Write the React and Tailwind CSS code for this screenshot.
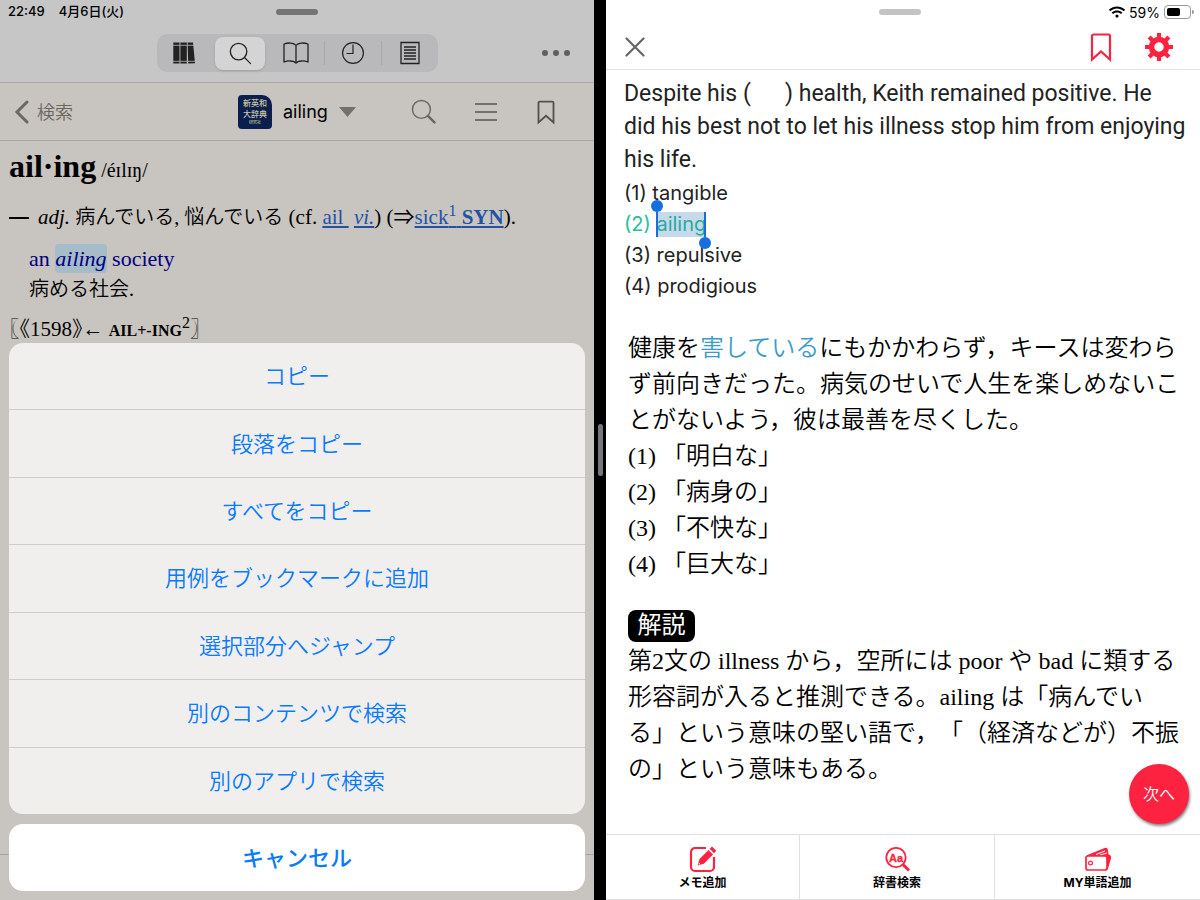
import { FaWifi } from "react-icons/fa";

const sheetActions = [
  "コピー",
  "段落をコピー",
  "すべてをコピー",
  "用例をブックマークに追加",
  "選択部分へジャンプ",
  "別のコンテンツで検索",
  "別のアプリで検索",
];

const choices = ["tangible", "ailing", "repulsive", "prodigious"];
const meanings = ["「明白な」", "「病身の」", "「不快な」", "「巨大な」"];

const SearchIcon = ({ className, handle = 1.2 }) => (
  <svg className={className} viewBox="0 0 24 24" fill="none" stroke="currentColor" strokeWidth="1.4">
    <circle cx="10" cy="10" r="8.6" />
    <path d="M16.2 16.2L22.5 22.5" strokeWidth={handle} strokeLinecap="round" />
  </svg>
);

const BooksIcon = () => (
  <svg className="w-6 h-6" viewBox="0 0 24 24" fill="currentColor">
    <path d="M1.3 1.5h6.2v21H1.3zM8.4 1.5h6.4v21H8.4zM15.6 1.5h5.4l2 20.8-6.8.2z" />
    <path d="M1 4.3h21M1 20.3h22" stroke="#b9b9bb" strokeWidth="0.8" />
  </svg>
);

const OpenBookIcon = () => (
  <svg className="w-7 h-6" viewBox="0 0 28 24" fill="none" stroke="currentColor" strokeWidth="1.3" strokeLinejoin="round">
    <path d="M14 4.500C12 1.500 6 1.500 2 3v18c4-1.500 10-1.500 12 1 2-2.500 8-2.500 12-1V3c-4-1.500-10-1.500-12 1.500zM14 4.500V22" />
  </svg>
);

const ClockIcon = () => (
  <svg className="w-6 h-6" viewBox="0 0 24 24" fill="none" stroke="currentColor" strokeWidth="1.2">
    <circle cx="12" cy="12" r="10.4" />
    <path d="M12 3.5v9H5.5" />
  </svg>
);

const PageIcon = () => (
  <svg className="w-6 h-6" viewBox="0 0 24 24" fill="none" stroke="currentColor" strokeWidth="1.3">
    <path d="M3 1.5h18v21H3zM6 6h12M6 9h12M6 12h12M6 15h12M6 18h12" />
  </svg>
);

const BookmarkIcon = ({ className, width }) => (
  <svg className={className} viewBox="0 0 24 30" fill="none" stroke="currentColor" strokeWidth={width}>
    <path d="M3 27.5V4a1.5 1.5 0 0 1 1.5-1.5h15A1.5 1.5 0 0 1 21 4v23.500l-9-8z" />
  </svg>
);

const GearIcon = () => (
  <svg className="w-7 h-7" viewBox="0 0 28 28" fill="none" stroke="currentColor">
    <circle cx="14" cy="14" r="7.5" strokeWidth="5.6" />
    <path
      d="M14 0v5M14 23v5M0 14h5M23 14h5M4.100 4.100l3.500 3.500M20.400 20.400l3.500 3.500M23.900 4.100l-3.500 3.500M7.600 20.400l-3.500 3.500"
      strokeWidth="4.2"
    />
  </svg>
);

const MemoIcon = () => (
  <svg className="w-7 h-7" viewBox="0 0 28 28" fill="none" stroke="currentColor">
    <path d="M17 3H6a4 4 0 0 0-4 4v15a4 4 0 0 0 4 4h15a4 4 0 0 0 4-4V12" strokeWidth="2.2" />
    <path d="M8.500 20.500l2-6.500L19.500 5l4.500 4.500-9.200 9.300zM20.700 3.800L23 1.500 27.300 5.800 25 8.200z" fill="currentColor" stroke="none" />
    <circle cx="10.300" cy="18.700" r="0.800" fill="white" stroke="none" />
  </svg>
);

const DictIcon = () => (
  <svg className="w-7 h-7" viewBox="0 0 28 28" fill="none" stroke="currentColor">
    <circle cx="13" cy="12.5" r="9.7" strokeWidth="1.8" />
    <path d="M20 19.5l6 6" strokeWidth="3" />
    <text x="13" y="16.5" textAnchor="middle" fontSize="11" fontFamily="Liberation Sans, sans-serif" fill="currentColor" strokeWidth="0.3">
      Aa
    </text>
  </svg>
);

const CardsIcon = () => (
  <svg className="w-7 h-7" viewBox="0 0 28 28" fill="none" stroke="currentColor" strokeWidth="1.7" strokeLinejoin="round">
    <path d="M3 11l18-7.300c1-.4 1.800.2 2 1.300l.8 5c2 .5 2.700 1.500 2.400 3L23 24" fill="currentColor" />
    <path d="M12 9.500l9-3.500M16 10l7-2" stroke="white" strokeWidth="1" />
    <rect x="2" y="11" width="21" height="14" rx="2" fill="white" />
    <circle cx="6.5" cy="18" r="1.9" strokeWidth="1.2" />
  </svg>
);

const DictionaryPane = () => (
  <section className="relative flex-1 min-w-0 flex flex-col bg-[#c8c4bf] text-black overflow-hidden">
    <header className="bg-[#c6c6c7] border-b border-[#a8a8a8]">
      <div className="grid grid-cols-3 items-center h-6 px-2">
        <div className="flex gap-3.5 text-[13px] font-medium font-['Inter','Noto_Sans_CJK_JP',sans-serif] whitespace-nowrap">
          <span>22:49</span>
          <span>4月6日(火)</span>
        </div>
        <span className="justify-self-center w-[42px] h-[6px] rounded-full bg-[#747475]" />
      </div>
      <div className="grid grid-cols-[1fr_auto_1fr] items-center h-[58px]">
        <nav className="col-start-2 flex items-center w-[281px] h-[38px] rounded-[10px] bg-[#b9b9bb] text-[#222]">
          <button className="flex-1 flex justify-center" aria-label="本棚">
            <BooksIcon />
          </button>
          <button className="flex items-center justify-center w-[50px] h-[33px] mx-[3px] rounded-lg bg-[#d4d4d5] shadow-sm" aria-label="検索">
            <SearchIcon className="w-[23px] h-[23px]" />
          </button>
          <button className="flex-1 flex justify-center" aria-label="本文">
            <OpenBookIcon />
          </button>
          <button className="flex-1 flex justify-center border-x border-[#a7a7a9]" aria-label="履歴">
            <ClockIcon />
          </button>
          <button className="flex-1 flex justify-center" aria-label="目次">
            <PageIcon />
          </button>
        </nav>
        <button className="justify-self-end flex gap-[5px] mr-6" aria-label="その他">
          <span className="w-[6px] h-[6px] rounded-full bg-[#606062]" />
          <span className="w-[6px] h-[6px] rounded-full bg-[#606062]" />
          <span className="w-[6px] h-[6px] rounded-full bg-[#606062]" />
        </button>
      </div>
    </header>

    <div className="flex items-center h-[58px] pl-[14px] pr-[38px] border-b border-[#aaa7a3] text-[#6b6763]">
      <button className="flex items-center gap-2 w-56 text-[18px] font-[350] font-['Noto_Sans_CJK_JP',sans-serif]">
        <svg className="w-[15px] h-6" viewBox="0 0 15 24" fill="none" stroke="currentColor" strokeWidth="3">
          <path d="M13 2L3 12l10 10" strokeLinecap="round" />
        </svg>
        検索
      </button>
      <button className="flex items-center gap-[11px] text-[18px] text-black font-['Inter',sans-serif]">
        <span className="flex flex-col items-center justify-center w-[34px] h-[34px] rounded rounded-tr-[10px] bg-[#0b1f4e] text-[#c9c3a0] text-[8px] leading-[11px] font-medium whitespace-nowrap font-['Noto_Sans_CJK_JP',sans-serif]">
          <span>新英和</span>
          <span>大辞典</span>
          <span className="text-[4px] leading-[7px]">研究社</span>
        </span>
        ailing
        <svg className="w-[17px] h-[10px] text-[#74706c]" viewBox="0 0 17 10" fill="currentColor">
          <path d="M0 0h17L8.5 10z" />
        </svg>
      </button>
      <div className="flex-1 flex items-center justify-end gap-[39px]">
        <button aria-label="検索">
          <SearchIcon className="w-[25px] h-[25px]" handle={2.4} />
        </button>
        <button className="flex flex-col gap-[6px] w-[22px]" aria-label="メニュー">
          <span className="w-full h-[2px] bg-[#74706c]" />
          <span className="w-full h-[2px] bg-[#74706c]" />
          <span className="w-full h-[2px] bg-[#74706c]" />
        </button>
        <button className="text-[#55514e]" aria-label="しおり">
          <BookmarkIcon className="w-[20px] h-[28px]" width={2.2} />
        </button>
      </div>
    </div>

    <article className="flex-1 px-[9px] pt-1 text-[21px] font-['Liberation_Serif','Noto_Sans_CJK_JP',serif] whitespace-nowrap">
      <h1 className="leading-[42px] text-[20px]">
        <b className="text-[32px]">ail·ing</b> /éɪlɪŋ/
      </h1>
      <p className="mt-[9px] flex items-center h-9">
        <span className="w-5 h-[2px] mr-[9px] bg-black" />
        <span>
          <i>adj.</i> <span className="text-[20px] font-[350]">病んでいる, 悩んでいる</span> (cf.{" "}
          <a href="#ail" className="text-[#2352a5] underline">ail&nbsp;</a>{" "}
          <a href="#vi" className="text-[#2352a5] underline italic">vi.</a>) (⇒
          <a href="#sick" className="text-[#2352a5] underline">
            sick<sup className="text-[16px]">1</sup> <b>SYN</b>
          </a>
          ).
        </span>
      </p>
      <p className="mt-2 ml-5 leading-[30px] text-[22px] text-[#000080]">
        an <i className="bg-[#a6bcc8] rounded py-[2px]">ailing</i> society
      </p>
      <p className="ml-5 leading-[30px] text-[20px] font-[350]">病める社会.</p>
      <p className="mt-2 leading-[34px]">
        <span className="font-[350] [font-feature-settings:'halt']">〖《</span>1598
        <span className="font-[350] [font-feature-settings:'halt']">》</span>← <b className="text-[16px]">AIL+-ING</b>
        <sup className="text-[16px]">2</sup>
        <span className="font-[350] [font-feature-settings:'halt']">〗</span>
      </p>
    </article>
    <footer className="h-[46px] border-t border-[#a8a5a1]" />

    <div className="absolute inset-x-[9px] bottom-[9px] flex flex-col gap-[10px] text-[22px] text-[#0a7aff] font-['Noto_Sans_CJK_JP',sans-serif]">
      <div className="grid h-[471px] rounded-[14px] bg-[#f0efed] divide-y divide-[#cfcdcb] overflow-hidden">
        {sheetActions.map((label) => (
          <button key={label} className="pb-[3px] font-[350]">
            {label}
          </button>
        ))}
      </div>
      <button className="h-[67px] pb-[3px] rounded-[14px] bg-white font-medium">キャンセル</button>
    </div>
  </section>
);

const QuizPane = () => (
  <section className="relative flex-1 min-w-0 flex flex-col bg-white text-[#222]">
    <header className="border-b border-[#e3e3e3]">
      <div className="grid grid-cols-3 items-center h-6 pr-[6px]">
        <span className="col-start-2 justify-self-center w-[42px] h-[6px] rounded-full bg-[#c3c3c5]" />
        <div className="flex items-center justify-end gap-1 text-[14px] text-black font-['Inter',sans-serif]">
          <FaWifi className="w-4 h-4" />
          59%
          <span className="flex items-center">
            <span className="flex items-center w-[27px] h-[14px] p-[2px] border border-[#999] rounded">
              <span className="w-[13px] h-full rounded-[2px] bg-black" />
            </span>
            <span className="w-[2px] h-1 ml-px rounded-r bg-[#999]" />
          </span>
        </div>
      </div>
      <div className="flex items-center h-[45px] pl-[19px] pr-[27px] text-[#fd2340]">
        <button className="text-[#666]" aria-label="閉じる">
          <svg className="w-5 h-5" viewBox="0 0 20 20" stroke="currentColor" strokeWidth="2.2" strokeLinecap="round">
            <path d="M1.5 1.5l17 17M18.500 1.500l-17 17" />
          </svg>
        </button>
        <button className="ml-auto mr-[31px]" aria-label="ブックマーク">
          <BookmarkIcon className="w-[26px] h-[30px]" width={2.2} />
        </button>
        <button aria-label="設定">
          <GearIcon />
        </button>
      </div>
    </header>

    <main className="flex-1 pl-[18px] pr-3 pt-[7px]">
      <p className="text-[23px] leading-[33px] font-['Roboto','Inter',sans-serif]">
        Despite his ( &nbsp; &nbsp; &nbsp;) health, Keith remained positive. He did his best not to let his illness stop him from enjoying his life.
      </p>
      <ol className="mt-[2px] text-[20px] leading-[31px] font-['Inter',sans-serif]">
        {choices.map((word, i) => (
          <li key={word} className={i === 1 ? "text-[#1fc29a]" : ""}>
            ({i + 1}){" "}
            {i === 1 ? (
              <span className="relative inline-block leading-[25px] bg-[#c9d9ec] text-[#1fae9f]">
                {word}
                <span className="absolute left-0 inset-y-0 w-[2px] bg-[#156fe0]" />
                <span className="absolute right-0 inset-y-0 w-[2px] bg-[#156fe0]" />
                <span className="absolute -left-[5px] -top-3 w-3 h-3 rounded-full bg-[#156fe0]" />
                <span className="absolute -right-[5px] -bottom-3 w-3 h-3 rounded-full bg-[#156fe0]" />
              </span>
            ) : (
              word
            )}
          </li>
        ))}
      </ol>

      <div className="mt-[28px] pl-1 text-[24px] leading-[36px] text-black font-[350] [text-spacing-trim:space-all] font-['Liberation_Serif','Noto_Sans_CJK_JP',serif]">
        <p>
          健康を<span className="text-[#3a9cc8]">害している</span>にもかかわらず，キースは変わら
          <br />
          ず前向きだった。病気のせいで人生を楽しめないこ
          <br />
          とがないよう，彼は最善を尽くした。
        </p>
        <ol>
          {meanings.map((text, i) => (
            <li key={text}>
              ({i + 1}) {text}
            </li>
          ))}
        </ol>
        <h2 className="mt-[28px] w-[67px] h-8 rounded-lg bg-black text-white text-center leading-[30px] font-normal">解説</h2>
        <p className="mt-px">
          第2文の illness から，空所には poor や bad に類する
          <br />
          形容詞が入ると推測できる。ailing は「病んでい
          <br />
          る」という意味の堅い語で，「（経済などが）不振
          <br />
          の」という意味もある。
        </p>
      </div>
    </main>

    <button className="absolute right-[11px] bottom-[76px] w-[60px] h-[60px] pb-[3px] rounded-full bg-[#fd2340] text-white text-[16px] font-[350] shadow-[1px_2px_3px_rgba(0,0,0,0.5)] font-['Noto_Sans_CJK_JP',sans-serif]">
      次へ
    </button>

    <nav className="grid grid-cols-[194px_195px_1fr] h-[66px] border-y border-[#e0e0e0] divide-x divide-[#e0e0e0] text-[12px] leading-4 text-black font-bold font-['Inter','Noto_Sans_CJK_JP',sans-serif]">
      <button className="flex flex-col items-center justify-center gap-[2px] pt-[2px]">
        <span className="text-[#fd2340]"><MemoIcon /></span>
        メモ追加
      </button>
      <button className="flex flex-col items-center justify-center gap-[2px] pt-[2px]">
        <span className="text-[#fd2340]"><DictIcon /></span>
        辞書検索
      </button>
      <button className="flex flex-col items-center justify-center gap-[2px] pt-[2px]">
        <span className="text-[#fd2340]"><CardsIcon /></span>
        MY単語追加
      </button>
    </nav>
  </section>
);

export default function App() {
  return (
    <div className="flex min-h-screen bg-black">
      <DictionaryPane />
      <div className="flex items-center justify-center w-3">
        <span className="w-[5px] h-[52px] rounded-full bg-[#77777a]" />
      </div>
      <QuizPane />
    </div>
  );
}
